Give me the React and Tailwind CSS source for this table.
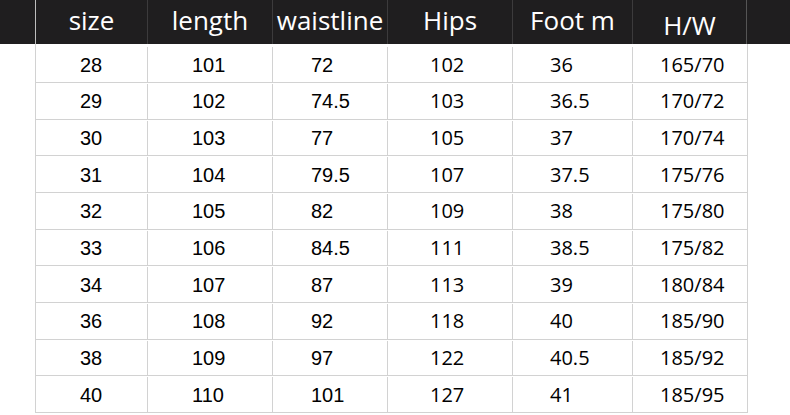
const cols = [
  { name: 'size', w: 'w-[112px]', pad: 'pl-[44px]', font: 'arial' },
  { name: 'length', w: 'w-[125px]', pad: 'pl-[44px]', font: 'arial' },
  { name: 'waistline', w: 'w-[115px]', pad: 'pl-[38px]', font: 'arial' },
  { name: 'Hips', w: 'w-[125px]', pad: 'pl-[42px]', font: 'open' },
  { name: 'Foot m', w: 'w-[120px]', pad: 'pl-[37px]', font: 'open' },
  { name: 'H/W', w: 'w-[114px]', pad: 'pl-[27px]', font: 'open' },
];

const rows = [
  ['28', '101', '72', '102', '36', '165/70'],
  ['29', '102', '74.5', '103', '36.5', '170/72'],
  ['30', '103', '77', '105', '37', '170/74'],
  ['31', '104', '79.5', '107', '37.5', '175/76'],
  ['32', '105', '82', '109', '38', '175/80'],
  ['33', '106', '84.5', '111', '38.5', '175/82'],
  ['34', '107', '87', '113', '39', '180/84'],
  ['36', '108', '92', '118', '40', '185/90'],
  ['38', '109', '97', '122', '40.5', '185/92'],
  ['40', '110', '101', '127', '41', '185/95'],
];

const App = () => {
  return (
    <div className="w-[790px] h-[415px] bg-white overflow-hidden">
      {/* Header bar */}
      <div className="h-[44px] bg-[#1f1e1f] flex pl-[35px]">
        <div className="flex border-l border-[#bdbdbd]">
          {cols.map((c, i) => (
            <div
              key={c.name}
              className={`${c.w} h-full flex justify-center text-white text-[26px] font-['Open_Sans',sans-serif] ${i < cols.length - 1 ? 'border-r border-[#3c3b3c]' : 'border-r border-[#555]'} ${c.name === 'H/W' ? 'pt-[6px]' : 'pt-[1px]'}`}
            >
              <span className="leading-[38px]">{c.name}</span>
            </div>
          ))}
        </div>
      </div>

      {/* Body rows */}
      <div className="pl-[35px]">
        <div className="inline-flex flex-col h-[369px] border-l border-r border-[#d2d2d2]">
          {rows.map((r, ri) => (
            <div
              key={ri}
              className={`flex border-b border-[#d2d2d2] ${ri === 0 ? 'h-[39px] shrink-0 pt-[3px]' : 'flex-1 pt-[1px]'}`}
            >
              {r.map((v, ci) => (
                <div
                  key={ci}
                  className={`${cols[ci].w} ${cols[ci].pad} flex items-center text-[20px] text-black ${ci < 5 ? 'border-r border-[#d2d2d2]' : ''} ${cols[ci].font === 'arial' ? "font-['Liberation_Sans',Arial,sans-serif]" : "font-['Open_Sans',sans-serif] font-medium"}`}
                >
                  {v}
                </div>
              ))}
            </div>
          ))}
        </div>
      </div>
    </div>
  );
};

export default App;
